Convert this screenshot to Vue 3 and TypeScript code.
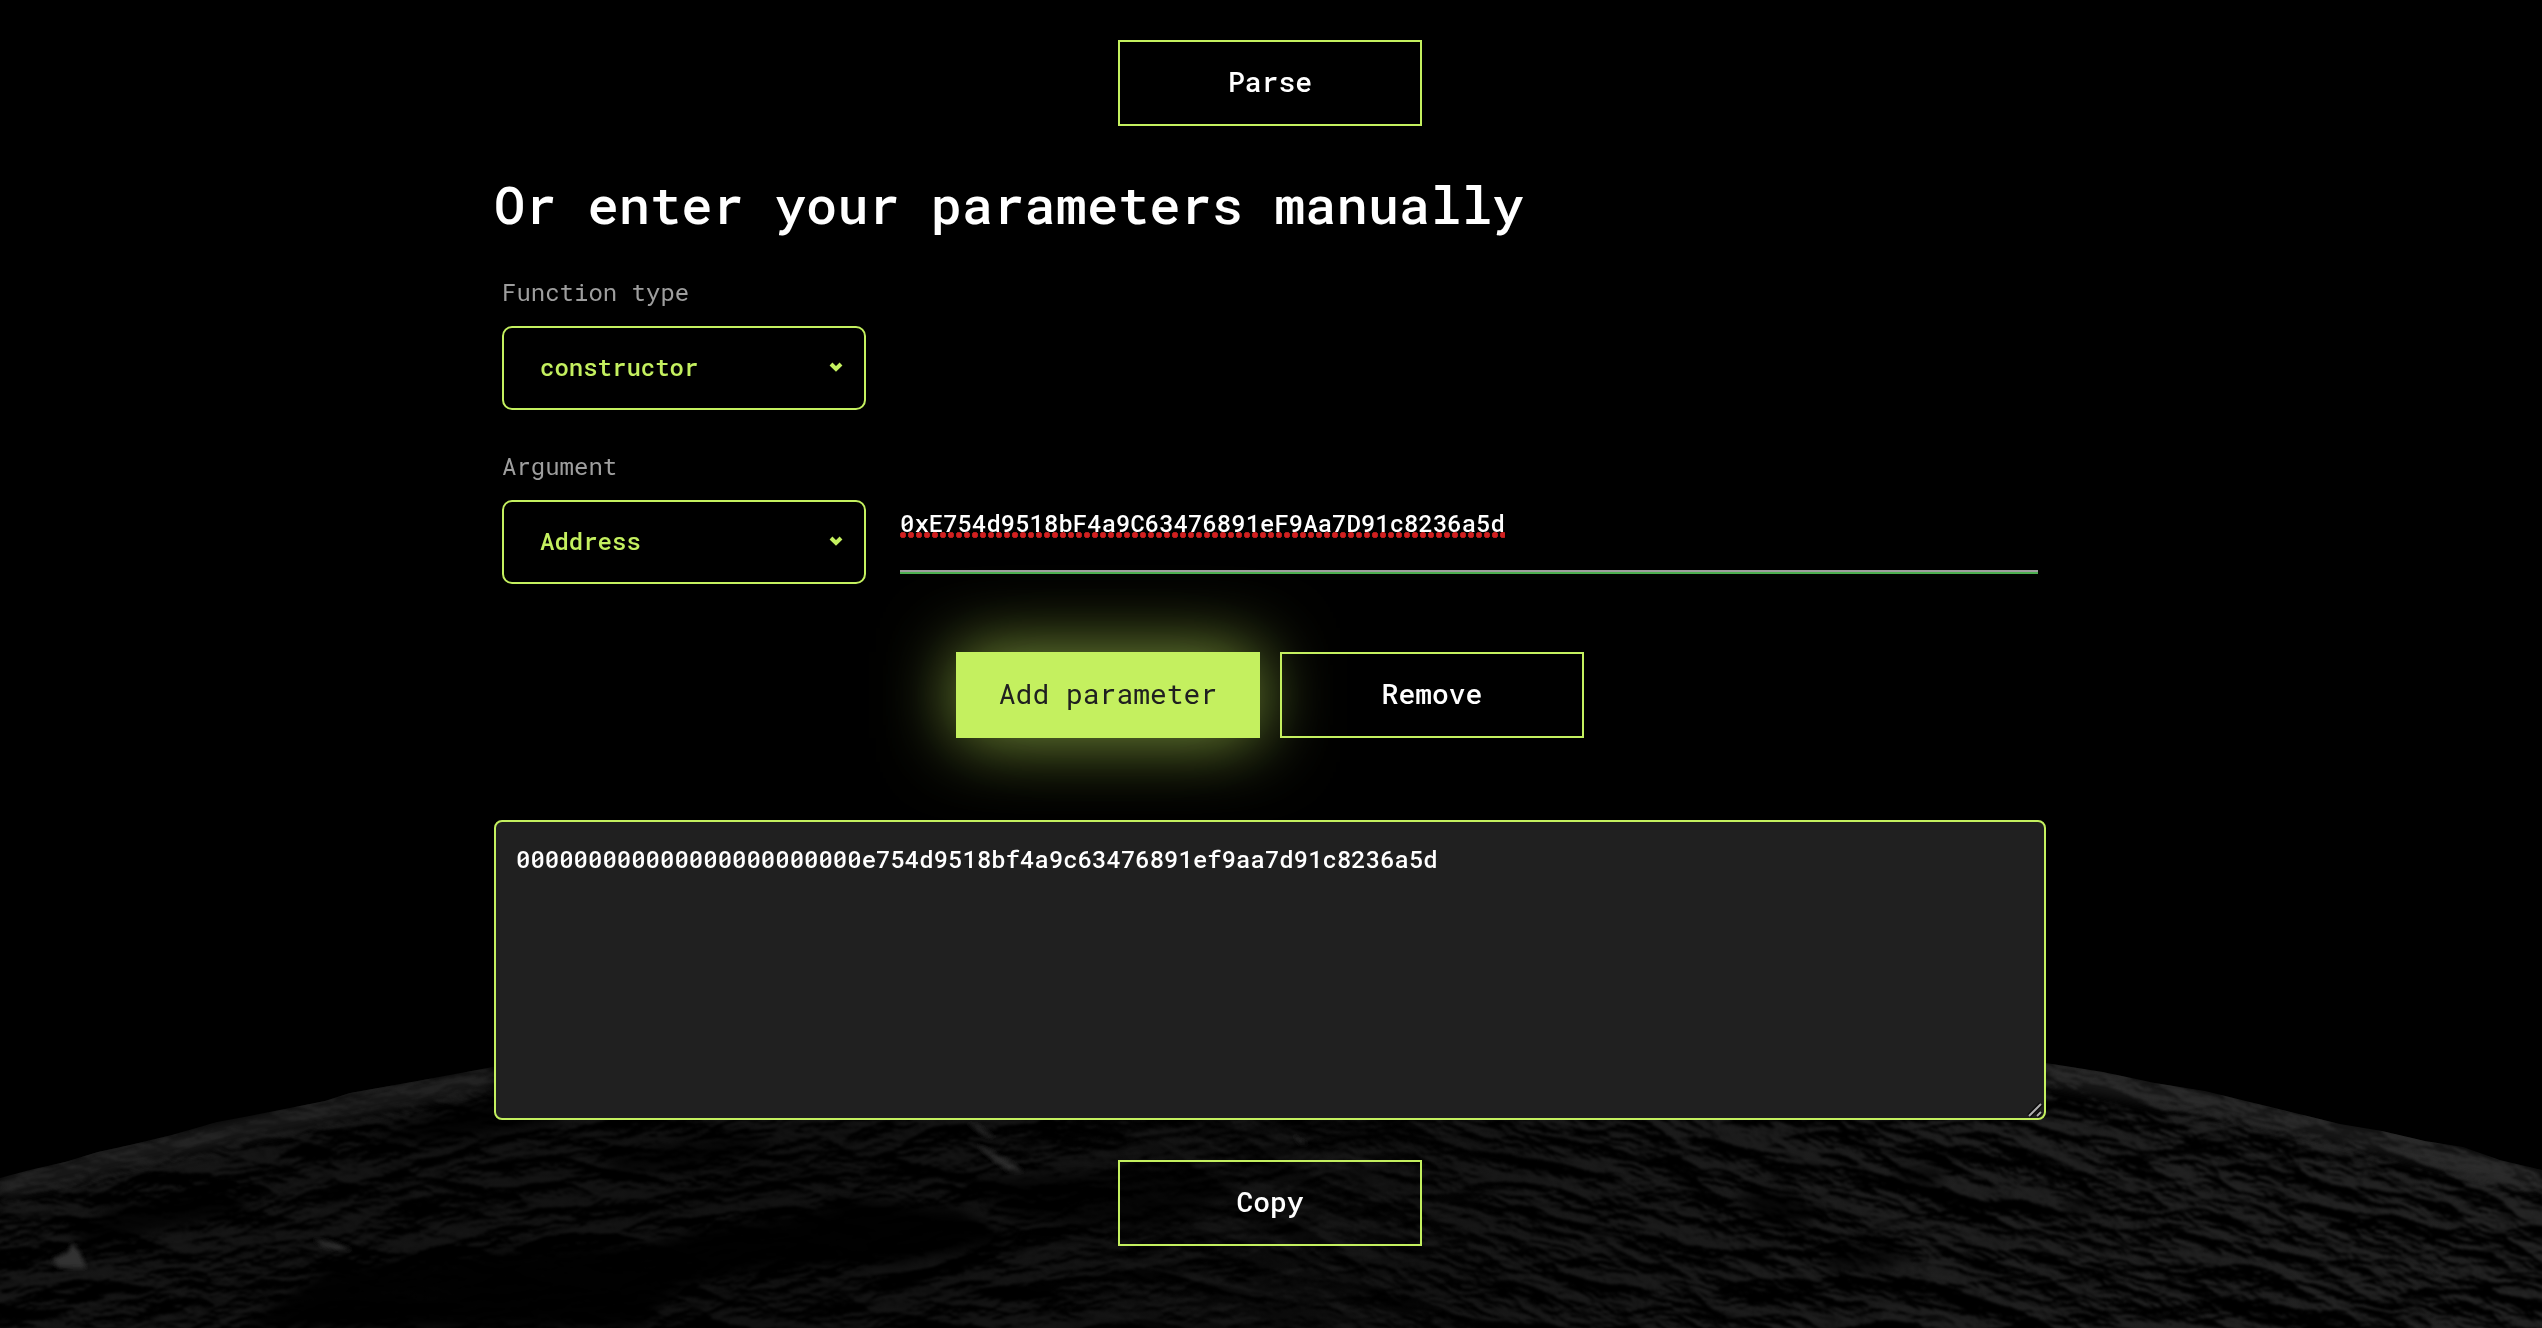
<script setup lang="ts">
import { computed, ref } from 'vue'

const functionType = ref('constructor')
const argumentType = ref('Address')
const argumentValue = ref('0xE754d9518bF4a9C63476891eF9Aa7D91c8236a5d')

const encoded = computed(() =>
  argumentValue.value.replace(/^0x/, '').toLowerCase().padStart(64, '0'),
)
const underlineWidth = computed(() => `${argumentValue.value.length}ch`)

const functionTypes = ['constructor', 'function']
const argumentTypes = ['Address', 'String', 'Bool', 'Uint256', 'Bytes']
</script>

<template>
  <div class="page">
    <svg class="moon" viewBox="0 0 2542 288" preserveAspectRatio="xMidYMax slice" aria-hidden="true">
      <defs>
        <clipPath id="surface">
          <path d="M0 138 L30 130 L65 122 L98 112 L130 105 L172 95 L217 82 L270 72 L325 61 L350 53 L423 40 L493 27 C800 -35 1700 -35 2046 23 L2103 32 L2155 43 L2205 51 L2250 62 L2291 72 L2340 84 L2382 91 L2425 101 L2463 107 L2500 120 L2542 130 V288 H0Z" />
        </clipPath>
        <filter id="rock" x="0" y="0" width="100%" height="100%" color-interpolation-filters="sRGB">
          <feTurbulence type="turbulence" baseFrequency="0.007 0.019" numOctaves="5" seed="8" result="noise" />
          <feColorMatrix in="noise" type="matrix" values="0 0 0 0 0  0 0 0 0 0  0 0 0 0 0  -1 0 0 0 1" result="height" />
          <feDiffuseLighting in="height" surfaceScale="26" diffuseConstant="0.14" lighting-color="#ffffff">
            <feDistantLight azimuth="285" elevation="28" />
          </feDiffuseLighting>
          <feGaussianBlur stdDeviation="1" />
        </filter>
        <filter id="soft" x="-20%" y="-40%" width="140%" height="180%">
          <feGaussianBlur stdDeviation="6" />
        </filter>
        <filter id="glint" x="-20%" y="-40%" width="140%" height="180%">
          <feGaussianBlur stdDeviation="2" />
        </filter>
        <linearGradient id="fade" x1="0" y1="0" x2="1" y2="0">
          <stop offset="0.4" stop-color="#000" />
          <stop offset="0.6" stop-color="#fff" />
        </linearGradient>
        <mask id="right-side">
          <rect width="2542" height="288" fill="url(#fade)" />
        </mask>
        <linearGradient id="shade" x1="0" y1="0" x2="1" y2="0">
          <stop offset="0" stop-color="#000" stop-opacity="0.35" />
          <stop offset="0.3" stop-color="#000" stop-opacity="0.5" />
          <stop offset="0.6" stop-color="#000" stop-opacity="0.3" />
          <stop offset="0.8" stop-color="#000" stop-opacity="0.1" />
          <stop offset="1" stop-color="#000" stop-opacity="0" />
        </linearGradient>
      </defs>
      <g clip-path="url(#surface)">
        <g transform="rotate(-7 0 288)">
          <rect x="-60" y="-40" width="2000" height="640" filter="url(#rock)" />
        </g>
        <g mask="url(#right-side)">
          <g transform="rotate(11 2542 288)">
            <rect x="900" y="-60" width="1700" height="700" filter="url(#rock)" />
          </g>
        </g>
        <rect width="2542" height="288" fill="url(#shade)" />
        <path d="M0 148 L130 115 L325 71 L493 37 M2046 33 L2205 61 L2382 101 L2542 140" fill="none" stroke="#3a3a3a" stroke-width="26" opacity="0.4" filter="url(#soft)" />
        <g filter="url(#soft)" fill="#000">
          <path opacity="0.8" d="M365 98 L430 80 L500 58 L560 40 V82 L500 92 L430 102Z" />
          <path opacity="0.75" d="M70 195 L110 168 L200 150 L250 158 L240 175 L160 190 L90 208Z" />
          <path opacity="0.9" d="M330 228 L500 214 L570 206 L640 208 L700 190 L790 178 L850 160 L960 170 L1010 200 L900 222 L780 225 L680 245 L640 288 H240Z" />
          <path opacity="0.6" d="M600 115 L740 95 L770 105 L720 125 L620 135Z" />
          <path opacity="0.6" d="M960 140 L1180 125 L1240 150 L1160 190 L1010 180Z" />
          <path opacity="0.7" d="M1735 155 L1770 150 L1825 170 L1800 185 L1755 178Z" />
          <path opacity="0.7" d="M1890 130 L1950 128 L1930 145 L1900 140Z" />
          <path opacity="0.6" d="M1820 215 L1870 205 L1920 215 L1880 230 L1830 228Z" />
          <path opacity="0.6" d="M2060 160 L2110 158 L2100 172 L2070 172Z" />
        </g>
        <g fill="#333" filter="url(#glint)">
          <path d="M52 219 L68 212 L72 203 L80 212 L86 228 L58 227Z" />
          <path d="M313 199 L335 203 L352 210 L340 210 L322 206Z" />
          <path opacity="0.7" d="M967 83 L980 86 L996 98 L982 95Z" />
          <path opacity="0.8" d="M976 104 L992 112 L1014 124 L1024 132 L1008 131 L992 119Z" />
          <path opacity="0.6" d="M1292 94 L1300 99 L1309 105 L1300 104Z" />
        </g>
      </g>
    </svg>

    <main class="content">
      <button type="button" class="button">Parse</button>

      <h1 class="title">Or enter your parameters manually</h1>

      <form class="form" @submit.prevent>
        <div class="field">
          <label class="label" for="function-type">Function type</label>
          <div class="select-box">
            <select id="function-type" v-model="functionType" class="select">
              <option v-for="name in functionTypes" :key="name">{{ name }}</option>
            </select>
            <svg class="chevron" viewBox="0 0 16 12" aria-hidden="true"><path d="M2 3 L7 8 L12 3" /></svg>
          </div>
        </div>

        <div class="field">
          <label class="label" for="argument-type">Argument</label>
          <div class="row">
            <div class="select-box">
              <select id="argument-type" v-model="argumentType" class="select">
                <option v-for="name in argumentTypes" :key="name">{{ name }}</option>
              </select>
              <svg class="chevron" viewBox="0 0 16 12" aria-hidden="true"><path d="M2 3 L7 8 L12 3" /></svg>
            </div>
            <div class="value-box">
              <span class="squiggle" :style="{ width: underlineWidth }"></span>
              <input v-model="argumentValue" class="value" type="text" aria-label="Argument value" spellcheck="false" />
            </div>
          </div>
        </div>

        <div class="actions">
          <button type="button" class="button filled">Add parameter</button>
          <button type="button" class="button">Remove</button>
        </div>
      </form>

      <div class="output-box">
        <textarea class="output" aria-label="Encoded parameters" spellcheck="false" readonly :value="encoded"></textarea>
        <svg class="grip" viewBox="0 0 16 16" aria-hidden="true">
          <path class="grip-edge" d="M2 14 L14 2 M10 14 L14 10" />
          <path class="grip-line" d="M2 14 L14 2 M10 14 L14 10" />
        </svg>
      </div>

      <button type="button" class="button">Copy</button>
    </main>
  </div>
</template>

<style>
body {
  background: #000;
}
</style>

<style scoped>
.page,
.page * {
  box-sizing: border-box;
}

.page {
  position: relative;
  min-height: 100vh;
  padding: 40px 26px 80px 24px;
  overflow: hidden;
  background: #000;
  color: #fff;
  font-family: 'Roboto Mono', 'DejaVu Sans Mono', monospace;
  font-size: 24px;
  font-weight: 500;
  line-height: 32px;
}

.moon {
  position: absolute;
  bottom: 0;
  left: 0;
  width: 100%;
  height: 288px;
}

.content {
  position: relative;
  display: flex;
  flex-direction: column;
  align-items: center;
  max-width: 1552px;
  margin: 0 auto;
}

.button {
  width: 304px;
  height: 86px;
  padding: 0 0 2px;
  border: 2px solid #c4f05f;
  background: transparent;
  color: #fff;
  font-family: inherit;
  font-size: 28px;
  font-weight: 500;
  line-height: 36px;
  cursor: pointer;
}

.filled {
  background: #c4f05f;
  color: #202020;
  font-weight: 400;
  box-shadow: 0 0 72px rgba(196, 240, 95, 0.65), 0 0 120px rgba(196, 240, 95, 0.06);
}

.title {
  align-self: stretch;
  margin: 46px 0 40px;
  font-size: 52px;
  font-weight: 500;
  line-height: 64px;
}

.form {
  align-self: stretch;
  padding: 0 8px;
}

.field {
  margin-bottom: 40px;
}

.label {
  display: block;
  margin-bottom: 18px;
  color: #9e9e9e;
  font-weight: 400;
}

.row {
  display: flex;
  align-items: flex-start;
  gap: 34px;
}

.select-box {
  position: relative;
  width: 364px;
}

.select {
  display: block;
  width: 100%;
  height: 84px;
  padding: 0 60px 2px 36px;
  border: 2px solid #c4f05f;
  border-radius: 10px;
  appearance: none;
  background: #000;
  color: #c4f05f;
  font: inherit;
}

.chevron {
  position: absolute;
  top: 35px;
  right: 21px;
  width: 16px;
  height: 12px;
  fill: none;
  stroke: #c4f05f;
  stroke-width: 4;
  pointer-events: none;
}

.value-box {
  position: relative;
  flex: 1;
}

.value {
  display: block;
  width: 100%;
  height: 74px;
  padding: 5px 0 31px;
  border: 0;
  border-bottom: 2px solid #4caf50;
  outline: 0;
  background: linear-gradient(#9e9e9e, #9e9e9e) left bottom / 100% 2px no-repeat;
  background-origin: padding-box;
  color: #fff;
  font: inherit;
}

.squiggle {
  position: absolute;
  top: 32px;
  left: 0;
  height: 6px;
  background: radial-gradient(circle at 3px 3px, #d22020 2px, #a01818 3px, transparent 3px) left top / 8px 6px;
}

.actions {
  display: flex;
  justify-content: center;
  gap: 20px;
  margin-top: 68px;
}

.output-box {
  position: relative;
  align-self: stretch;
  margin: 82px 0 40px;
}

.output {
  display: block;
  width: 100%;
  height: 300px;
  padding: 21px 20px;
  border: 2px solid #c4f05f;
  border-radius: 8px;
  outline: 0;
  background: #202020;
  color: #fff;
  font: inherit;
  resize: both;
}

.output::-webkit-resizer {
  background: transparent;
}

.grip {
  position: absolute;
  right: 3px;
  bottom: 2px;
  width: 16px;
  height: 16px;
  fill: none;
  pointer-events: none;
}

.grip-edge {
  stroke: #0c0c0c;
  stroke-width: 5;
}

.grip-line {
  stroke: #b0b0b0;
  stroke-width: 2;
}
</style>
